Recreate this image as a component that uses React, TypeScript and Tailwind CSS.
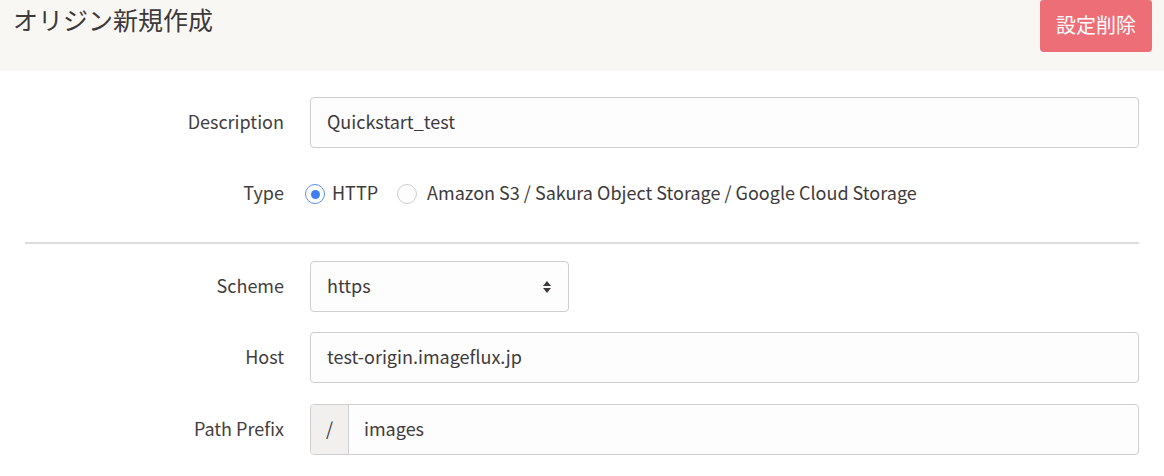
import React from "react";

const font = { fontFamily: '"Noto Sans CJK JP", "Noto Sans", sans-serif' };

function Label({ children }: { children: React.ReactNode }) {
  return (
    <div className="w-[310px] shrink-0 pr-[26px] pb-[3px] text-right text-[18px] text-[#443e40]">
      {children}
    </div>
  );
}

export default function App() {
  return (
    <div className="w-[1164px] h-[476px] bg-white overflow-hidden text-[#403a3c]" style={font}>
      <div className="h-[71px] bg-[#f8f7f4] flex items-start justify-between pl-[13px] pr-[12px]">
        <h1 className="text-[25px] leading-none mt-[7px] text-[#3e393a]">オリジン新規作成</h1>
        <button className="w-[112px] h-[52px] pb-[3px] rounded-b-[4px] rounded-t-[3px] bg-[#ee6e78] text-white text-[20px] mt-0">
          設定削除
        </button>
      </div>

      <div className="flex items-center mt-[26px] h-[51px]">
        <Label>Description</Label>
        <div className="w-[829px] h-[51px] border border-[#cfcfcf] rounded-[4px] bg-[#fdfdfd] flex items-center px-[16px] pb-[3px] text-[18px]">
          Quickstart_test
        </div>
      </div>

      <div className="flex items-center mt-[22px] h-[48px]">
        <Label>Type</Label>
        <div className="flex items-center text-[18px] -ml-[5px]">
          <span className="w-[20px] h-[20px] rounded-full border-[1.5px] border-[#5b8ef2] flex items-center justify-center bg-white">
            <span className="w-[9px] h-[9px] rounded-full bg-[#3f7ef0]" />
          </span>
          <span className="ml-[7px] pb-[3px]">HTTP</span>
          <span className="ml-[19px] w-[20px] h-[20px] rounded-full border border-[#cfcfcf] bg-[#fdfdfd]" />
          <span className="ml-[10px] pb-[3px]">Amazon S3 / Sakura Object Storage / Google Cloud Storage</span>
        </div>
      </div>

      <div className="ml-[25px] w-[1114px] h-[2px] bg-[#dcdcdc] mt-[24px]" />

      <div className="flex items-center mt-[17px] h-[51px]">
        <Label>Scheme</Label>
        <div className="w-[259px] h-[51px] border border-[#cfcfcf] rounded-[4px] bg-[#fdfdfd] flex items-center justify-between pl-[16px] pr-[16px] text-[18px]">
          <span className="pb-[3px]">https</span>
          <svg width="10" height="14" viewBox="0 0 10 14">
            <path d="M5 1 L9 6 L1 6 Z" fill="#3e393a" />
            <path d="M5 13 L9 8 L1 8 Z" fill="#3e393a" />
          </svg>
        </div>
      </div>

      <div className="flex items-center mt-[20px] h-[51px]">
        <Label>Host</Label>
        <div className="w-[829px] h-[51px] border border-[#cfcfcf] rounded-[4px] bg-[#fdfdfd] flex items-center px-[16px] pb-[3px] text-[18px]">
          test-origin.imageflux.jp
        </div>
      </div>

      <div className="flex items-center mt-[21px] h-[51px]">
        <Label>Path Prefix</Label>
        <div className="w-[829px] h-[51px] border border-[#cfcfcf] rounded-[4px] bg-[#fdfdfd] flex items-stretch text-[18px] overflow-hidden">
          <div className="w-[38px] bg-[#f1f0ef] border-r border-[#cfcfcf] flex items-center justify-center pb-[3px]">/</div>
          <div className="flex items-center pl-[15px] pb-[3px]">images</div>
        </div>
      </div>
    </div>
  );
}
